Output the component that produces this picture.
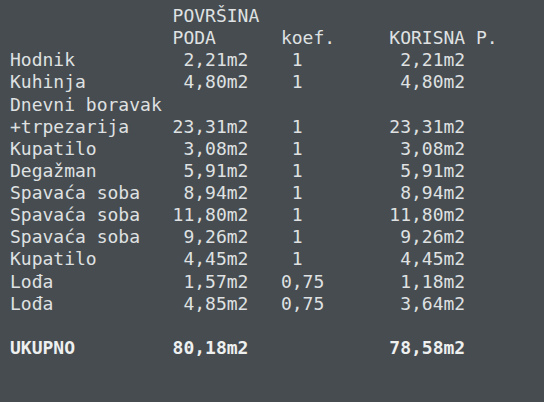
const rows: [string, string, string, string][] = [
  ['Hodnik', '2,21m2', '1', '2,21m2'],
  ['Kuhinja', '4,80m2', '1', '4,80m2'],
  ['Dnevni boravak', '', '', ''],
  ['+trpezarija', '23,31m2', '1', '23,31m2'],
  ['Kupatilo', '3,08m2', '1', '3,08m2'],
  ['Degažman', '5,91m2', '1', '5,91m2'],
  ['Spavaća soba', '8,94m2', '1', '8,94m2'],
  ['Spavaća soba', '11,80m2', '1', '11,80m2'],
  ['Spavaća soba', '9,26m2', '1', '9,26m2'],
  ['Kupatilo', '4,45m2', '1', '4,45m2'],
  ['Lođa', '1,57m2', '0,75', '1,18m2'],
  ['Lođa', '4,85m2', '0,75', '3,64m2'],
];

function line([name, area, koef, useful]: [string, string, string, string]) {
  if (!area) return name;
  const k = koef === '1' ? ' 1' : koef;
  return (
    name.padEnd(15) +
    area.padStart(7) +
    '   ' +
    k.padEnd(10) +
    useful.padStart(7)
  );
}

export default function App() {
  return (
    <div className="min-h-screen w-full bg-[#474c50] text-[#dfe1e2]">
      <pre className="pl-[10px] pt-[5px] text-[18px] leading-[22.13px] font-['DejaVu_Sans_Mono',monospace]">
        {'               POVRŠINA\n'}
        {'               PODA      koef.     KORISNA P.\n'}
        {rows.map((r) => line(r) + '\n').join('')}
        {'\n'}
        <span className="font-bold text-[#eef0f0]">
          {'UKUPNO'.padEnd(15) + '80,18m2'.padStart(7) + ' '.repeat(13) + '78,58m2'}
        </span>
      </pre>
    </div>
  );
}
